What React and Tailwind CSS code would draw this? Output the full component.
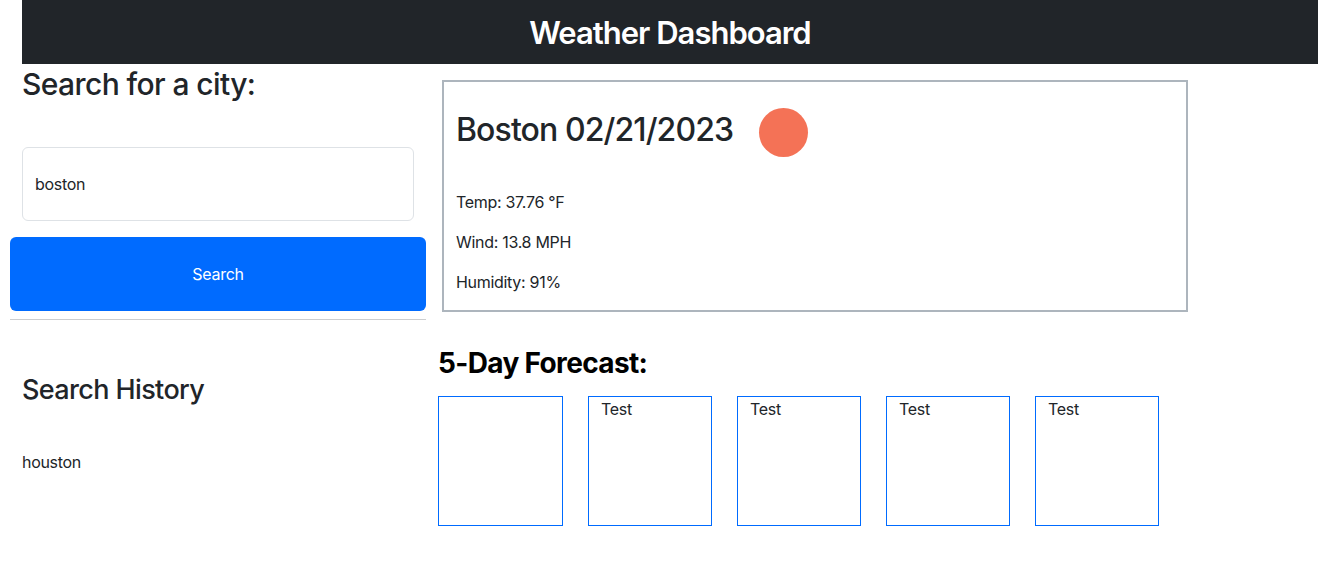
const days = ['', 'Test', 'Test', 'Test', 'Test'];

export default function App() {
  return (
    <div className="min-h-[568px] bg-white text-[#212529] font-['Inter',sans-serif] text-base tracking-[-0.3px]">
      <header className="mx-[22px] mr-[16px] h-16 bg-[#212529] flex items-center justify-center">
        <h1 className="text-[31px] font-semibold leading-none text-white tracking-[-1px]">Weather Dashboard</h1>
      </header>
      <div className="flex">
        <aside className="ml-[10px] w-[416px] shrink-0">
          <h2 className="px-3 pt-[2px] text-[30px] font-[550] leading-9 tracking-[-0.6px]">Search for a city:</h2>
          <div className="px-3 mt-[45px]">
            <input
              readOnly
              value="boston"
              className="w-full h-[74px] px-3 border border-[#dee2e6] rounded-md text-base text-[#212529] outline-none"
            />
          </div>
          <button className="mt-4 w-full h-[74px] bg-[#006bff] rounded-md text-white text-base">Search</button>
          <hr className="mt-2 border-[#ccced0]" />
          <h3 className="px-3 mt-[52px] text-[27px] font-[550] leading-9 tracking-[-0.62px]">Search History</h3>
          <p className="px-3 mt-[42px] leading-6">houston</p>
        </aside>
        <main className="flex-1 ml-3">
          <section className="ml-1 mt-4 w-[746px] h-[232px] border-2 border-[#adb5bd] px-3">
            <div className="flex items-center pt-[26px]">
              <h2 className="text-[32px] font-[550] leading-9 -mt-[6px] tracking-[-0.9px]">Boston 02/21/2023</h2>
              <span className="ml-[26px] size-[49px] rounded-full bg-[#f47256]" />
            </div>
            <p className="mt-[33px] leading-6">Temp: 37.76 °F</p>
            <p className="mt-4 leading-6">Wind: 13.8 MPH</p>
            <p className="mt-4 leading-6">Humidity: 91%</p>
          </section>
          <h3 className="mt-[33px] text-[28px] font-bold leading-9 text-black tracking-[-0.65px]">5-Day Forecast:</h3>
          <div className="flex gap-[25px] mt-[15px]">
            {days.map((d, i) => (
              <div key={i} className={`${i === 0 ? 'w-[125px]' : 'w-[124px]'} h-[130px] border border-[#006bff] px-3 leading-6`}>
                {d}
              </div>
            ))}
          </div>
        </main>
      </div>
    </div>
  );
}
